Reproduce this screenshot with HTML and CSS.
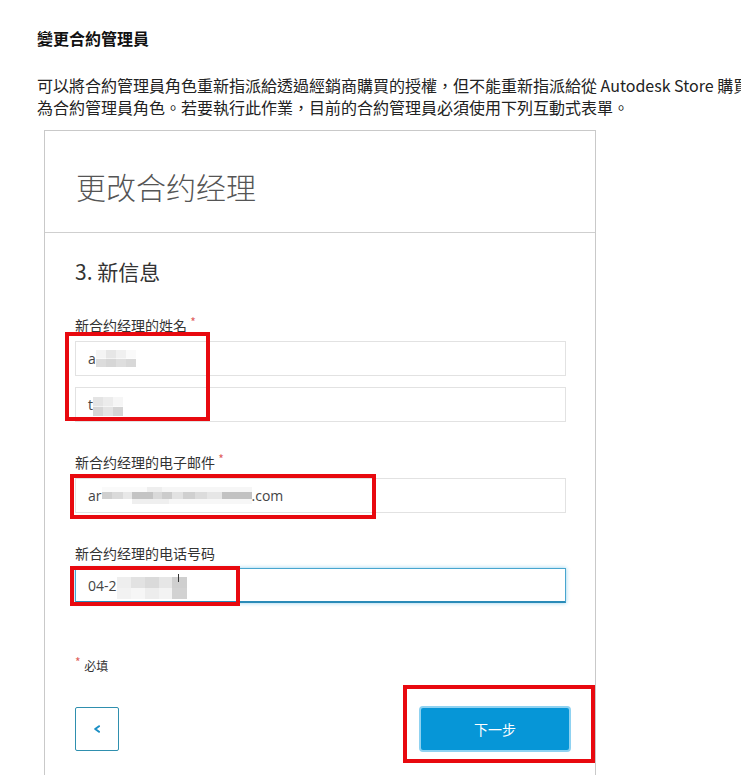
FILE: index.html
```
<!DOCTYPE html>
<html lang="zh-Hant">
<head>
<meta charset="utf-8">
<title>變更合約管理員</title>
<link rel="stylesheet" href="styles.css">
</head>
<body>
<div class="page">
  <h3 class="intro-title">變更合約管理員</h3>
  <p class="intro-text">可以將合約管理員角色重新指派給透過經銷商購買的授權，但不能重新指派給從 Autodesk Store 購買的授權。使用者可以被指派作<br>為合約管理員角色。若要執行此作業，目前的合約管理員必須使用下列互動式表單。</p>

  <section class="card">
    <header class="card-header">
      <h1 class="card-title">更改合约经理</h1>
    </header>
    <div class="card-body">
      <h2 class="step-title">3. 新信息</h2>

      <div class="field field-first">
        <div class="field-label">新合约经理的姓名 <span class="req">*</span></div>
        <div class="input">a<span class="mosaic mosaic-first"></span></div>
        <div class="input input-stack">t<span class="mosaic mosaic-last"></span></div>
      </div>

      <div class="field">
        <div class="field-label">新合约经理的电子邮件 <span class="req">*</span></div>
        <div class="input">ar<span class="mosaic mosaic-email"></span>.com</div>
      </div>

      <div class="field">
        <div class="field-label">新合约经理的电话号码</div>
        <div class="input input-focus">04-2<span class="mosaic mosaic-phone"><span class="caret"></span></span></div>
      </div>

      <p class="required-note"><span class="req">*</span> 必填</p>

      <div class="actions">
        <button class="btn-back" type="button" aria-label="上一步">
          <svg width="8" height="8" viewBox="0 0 8 8"><path d="M6 1.2 L2.2 4 L6 6.8" fill="none" stroke="#1b8fc4" stroke-width="2" stroke-linecap="round" stroke-linejoin="round"/></svg>
        </button>
        <button class="btn-next" type="button">下一步</button>
      </div>
    </div>
  </section>
</div>

<div class="mark mark-name"></div>
<div class="mark mark-email"></div>
<div class="mark mark-phone"></div>
<div class="mark mark-next"></div>
</body>
</html>
```

FILE: styles.css
```
html, body {
  margin: 0;
  padding: 0;
  background: #ffffff;
}

body {
  position: relative;
  width: 741px;
  height: 775px;
  overflow: hidden;
  font-family: "Noto Sans CJK TC", "Noto Sans", sans-serif;
  color: #222;
}

.page {
  padding: 27px 0 0 37px;
}

.intro-title {
  margin: 0;
  font-size: 16px;
  line-height: 22px;
  font-weight: 700;
  color: #111;
}

.intro-text {
  margin: 25px 0 0;
  font-size: 16px;
  line-height: 22px;
  color: #222;
  white-space: nowrap;
}

.card {
  margin: 12px 0 0 7px;
  width: 550px;
  border: 1px solid #c9c9c9;
  font-family: "Noto Sans CJK SC", "Noto Sans", sans-serif;
}

.card-header {
  padding: 33px 30px 24px 31px;
  border-bottom: 1px solid #cfcfcf;
}

.card-title {
  margin: 0;
  font-size: 30px;
  line-height: 44px;
  font-weight: 300;
  color: #555;
}

.card-body {
  padding: 25px 29px 30px 30px;
}

.step-title {
  margin: 0;
  font-size: 21px;
  line-height: 26px;
  font-weight: 400;
  color: #333;
}

.field {
  margin-top: 31px;
}

.field-first {
  margin-top: 32px;
}

.field-label {
  font-size: 14px;
  line-height: 18px;
  color: #333;
  margin-bottom: 6px;
}

.req {
  color: #e0605c;
  font-size: 12px;
  position: relative;
  top: -4px;
}

.input {
  box-sizing: border-box;
  height: 35px;
  border: 1px solid #e2e2e2;
  padding: 0 12px;
  display: flex;
  align-items: center;
  font-family: "Open Sans", "Noto Sans", sans-serif;
  font-size: 14px;
  color: #444;
}

.input-stack {
  margin-top: 11px;
}

.input-focus {
  border: 1px solid #48a6cf;
  border-bottom: 2px solid #2a8bb8;
  box-shadow: 0 0 4px rgba(6, 150, 215, 0.45);
}

.mosaic {
  display: inline-block;
  position: relative;
}

.mosaic-first {
  width: 40px;
  height: 17px;
  background:
    linear-gradient(90deg, #f4f4f4 0 25%, #e6e6e6 25% 50%, #f0f0f0 50% 75%, #fafafa 75% 100%) top / 100% 50% no-repeat,
    linear-gradient(90deg, #dcdcdc 0 25%, #d6d6d6 25% 50%, #dedede 50% 75%, #d8d8d8 75% 100%) bottom / 100% 50% no-repeat;
}

.mosaic-last {
  width: 30px;
  height: 19px;
  margin-top: 4px;
  background:
    linear-gradient(90deg, #e4e4e4 0 33%, #ececec 33% 66%, #f6f6f6 66% 100%) top / 100% 50% no-repeat,
    linear-gradient(90deg, #d6d6d6 0 33%, #e4e4e4 33% 66%, #d4d4d4 66% 100%) bottom / 100% 50% no-repeat;
}

.mosaic-email {
  width: 150px;
  height: 18px;
  background:
    linear-gradient(90deg, #fafafa 0 30%, #eeeeee 30% 40%, #f6f6f6 40% 100%) top / 100% 30% no-repeat,
    linear-gradient(90deg, #cfcfcf 0 7%, #dadada 7% 14%, #e8e8e8 14% 20%, #c4c4c4 20% 34%, #d9d9d9 34% 40%, #cccccc 40% 47%, #e2e2e2 47% 54%, #d0d0d0 54% 62%, #dcdcdc 62% 70%, #e6e6e6 70% 80%, #c2c2c2 80% 100%) center / 100% 40% no-repeat,
    linear-gradient(90deg, #ffffff 0 20%, #efefef 20% 45%, #f7f7f7 45% 100%) bottom / 100% 30% no-repeat;
}

.mosaic-phone {
  width: 70px;
  height: 22px;
  margin-top: 6px;
  background:
    linear-gradient(90deg, #eeeeee 0 20%, #e2e2e2 20% 40%, #dadada 40% 60%, #e6e6e6 60% 78%, #cfcfcf 78% 100%) top / 100% 50% no-repeat,
    linear-gradient(90deg, #f2f2f2 0 20%, #f6f6f6 20% 40%, #ededed 40% 60%, #f3f3f3 60% 78%, #d2d2d2 78% 100%) bottom / 100% 50% no-repeat;
}

.caret {
  position: absolute;
  left: 61px;
  top: -3px;
  width: 1px;
  height: 8px;
  background: #333;
}

.required-note {
  margin: 55px 0 0;
  font-size: 12px;
  line-height: 16px;
  color: #333;
}

.required-note .req {
  font-size: 12px;
  top: -4px;
  margin-right: 1px;
}

.actions {
  margin-top: 32px;
  margin-right: -5px;
  display: flex;
  align-items: center;
  justify-content: space-between;
}

.btn-back {
  box-sizing: border-box;
  width: 44px;
  height: 44px;
  border: 1px solid #2f8fae;
  border-radius: 2px;
  background: #fff;
  padding: 0;
  display: flex;
  align-items: center;
  justify-content: center;
}

.btn-next {
  box-sizing: border-box;
  width: 152px;
  height: 46px;
  background: #0696d7;
  border: 2px solid #8fd2f1;
  border-radius: 4px;
  color: #fff;
  font-family: "Noto Sans CJK SC", sans-serif;
  font-size: 14px;
  padding: 0;
}

.mark {
  position: absolute;
  box-sizing: border-box;
  border: 4px solid #e8090f;
}

.mark-name {
  left: 65px;
  top: 332px;
  width: 145px;
  height: 89px;
}

.mark-email {
  left: 70px;
  top: 474px;
  width: 306px;
  height: 45px;
}

.mark-phone {
  left: 70px;
  top: 566px;
  width: 170px;
  height: 40px;
}

.mark-next {
  left: 403px;
  top: 685px;
  width: 192px;
  height: 78px;
}
```
